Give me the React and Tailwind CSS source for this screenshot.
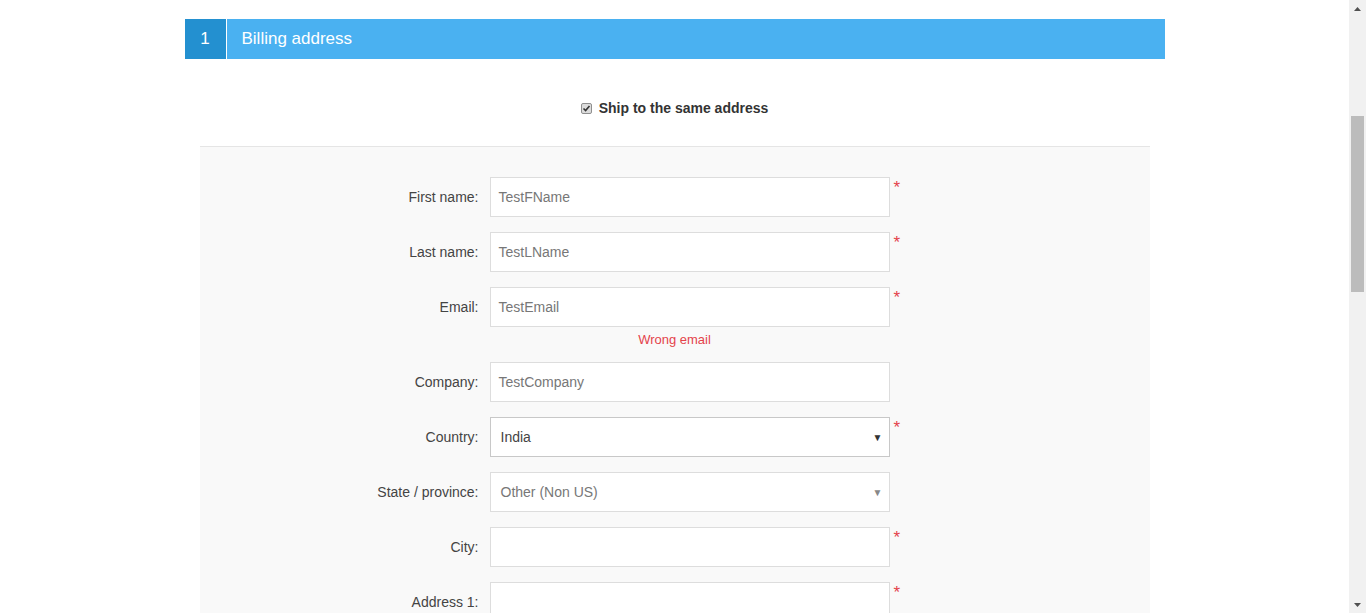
import React from "react";

const Star = () => (
  <span className="ml-[4px] mt-[2px] self-start text-[17px] leading-[17px] text-[#e4434b]">*</span>
);

function Row({ label, children, required, extraBelow }) {
  return (
    <div className="mb-[15px]">
      <div className="flex items-start">
        <label className="w-[290px] h-[40px] pr-[11px] flex items-center justify-end text-[14px] text-[#444]">
          {label}
        </label>
        <div className="w-[400px]">{children}</div>
        {required ? <Star /> : null}
      </div>
      {extraBelow}
    </div>
  );
}

function TextInput({ value }) {
  return (
    <div className="h-[40px] w-[400px] bg-white border border-[#ddd] flex items-center pl-[8px] text-[14px] text-[#777]">
      {value}
    </div>
  );
}

function Select({ value, dark }) {
  return (
    <div
      className={
        "h-[40px] w-[400px] bg-white border flex items-center pl-[10px] pr-[6px] text-[14px] " +
        (dark ? "border-[#c8c8c8] text-[#444]" : "border-[#ddd] text-[#777]")
      }
    >
      <span className="flex-1">{value}</span>
      <span className={"text-[10px] " + (dark ? "text-[#333]" : "text-[#888]")}>▼</span>
    </div>
  );
}

export default function App() {
  return (
    <div
      className="flex w-full h-[613px] overflow-hidden bg-white"
      style={{ fontFamily: '"Liberation Sans", Arial, sans-serif' }}
    >
      <div className="flex-1">
        <div className="w-[980px] mx-auto pt-[19px]">
          <div className="flex h-[40px] bg-[#4ab1f1] text-white text-[17px]">
            <div className="w-[41px] flex items-center justify-center bg-[#2390d0] border-r border-white box-content">
              1
            </div>
            <div className="flex items-center pl-[15px]">Billing address</div>
          </div>

          <div className="mt-[41px] mb-[29px] h-[17px] flex items-center justify-center">
            <span className="w-[11px] h-[11px] mr-[7px] rounded-[2px] border border-[#8f8f8f] bg-[#dcdcdc] flex items-center justify-center">
              <svg width="9" height="9" viewBox="0 0 9 9">
                <path d="M1.5 4.5 L3.6 6.6 L7.5 2" stroke="#333" strokeWidth="1.6" fill="none" />
              </svg>
            </span>
            <span className="text-[14px] font-bold text-[#333]">Ship to the same address</span>
          </div>

          <div className="mx-[15px] border-t border-[#e5e5e5] bg-[#f9f9f9] pt-[30px] pb-[20px]">
            <Row label="First name:" required>
              <TextInput value="TestFName" />
            </Row>
            <Row label="Last name:" required>
              <TextInput value="TestLName" />
            </Row>
            <Row
              label="Email:"
              required
              extraBelow={
                <div className="mt-[5px] h-[15px] text-center text-[13px] leading-[15px] text-[#e4434b]">
                  Wrong email
                </div>
              }
            >
              <TextInput value="TestEmail" />
            </Row>
            <Row label="Company:">
              <TextInput value="TestCompany" />
            </Row>
            <Row label="Country:" required>
              <Select value="India" dark />
            </Row>
            <Row label="State / province:">
              <Select value="Other (Non US)" />
            </Row>
            <Row label="City:" required>
              <TextInput value="" />
            </Row>
            <Row label="Address 1:" required>
              <TextInput value="" />
            </Row>
          </div>
        </div>
      </div>

      <div className="w-[17px] h-[613px] bg-[#f1f1f1] flex flex-col">
        <div className="h-[17px] flex items-center justify-center">
          <svg width="7" height="4" viewBox="0 0 7 4"><path d="M0 4 L3.5 0 L7 4 Z" fill="#505050" /></svg>
        </div>
        <div className="flex-1">
          <div className="mt-[99px] ml-[2px] w-[13px] h-[176px] bg-[#bcbcbc]" />
        </div>
        <div className="h-[17px] flex items-center justify-center">
          <svg width="7" height="4" viewBox="0 0 7 4"><path d="M0 0 L3.5 4 L7 0 Z" fill="#505050" /></svg>
        </div>
      </div>
    </div>
  );
}
